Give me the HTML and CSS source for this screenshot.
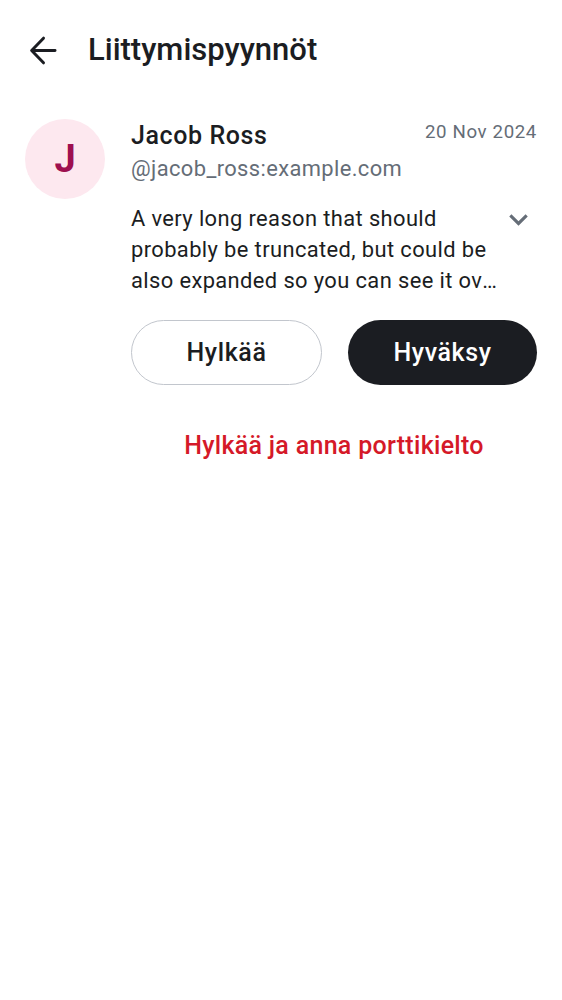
FILE: index.html
```html
<!DOCTYPE html>
<html>
<head>
<meta charset="utf-8">
<link rel="stylesheet" href="styles.css">
</head>
<body>
<header class="topbar">
  <button class="back" aria-label="Back">
    <svg width="37" height="37" viewBox="0 0 24 24"><path d="M19.5 12H4.8M12 4L4.3 12 12 20" fill="none" stroke="#1b1d22" stroke-width="1.9" stroke-linecap="round" stroke-linejoin="round"/></svg>
  </button>
  <h1 class="title">Liittymispyynnöt</h1>
</header>
<main class="request">
  <div class="avatar">J</div>
  <div class="content">
    <div class="head">
      <div class="who">
        <div class="name">Jacob Ross</div>
        <div class="handle">@jacob_ross:example.com</div>
      </div>
      <div class="date">20 Nov 2024</div>
    </div>
    <div class="reason-row">
      <p class="reason">A very long reason that should probably be truncated, but could be also expanded so you can see it <span class="tail">over and over again</span></p>
      <svg class="chev" width="37" height="37" viewBox="0 0 24 24"><path d="M16.59 8.59L12 13.17 7.41 8.59 6 10l6 6 6-6z" fill="#656d77"/></svg>
    </div>
    <div class="actions">
      <button class="btn outline">Hylkää</button>
      <button class="btn filled">Hyväksy</button>
    </div>
    <button class="ban">Hylkää ja anna porttikielto</button>
  </div>
</main>
</body>
</html>
```
FILE: styles.css
```css
* { box-sizing: border-box; }
body {
  margin: 0;
  background: #ffffff;
  font-family: Roboto, "Noto Sans", sans-serif;
  color: #1b1d22;
  width: 562px;
}
.topbar {
  display: flex;
  align-items: center;
  height: 100px;
  padding-left: 25px;
}
.back {
  border: 0;
  background: none;
  padding: 0;
  width: 37px;
  height: 37px;
  display: flex;
  align-items: center;
  justify-content: center;
  margin-right: 26px;
}
.title {
  margin: 0;
  font-size: 31px;
  font-weight: 500;
  line-height: 40px;
  color: #1b1d22;
}
.request {
  display: flex;
  padding: 19px 25px 0 25px;
  gap: 26px;
}
.avatar {
  width: 80px;
  height: 80px;
  flex: none;
  border-radius: 50%;
  background: #fde8ef;
  color: #9e0f4f;
  font-size: 38px;
  font-weight: 700;
  display: flex;
  align-items: center;
  justify-content: center;
}
.content {
  flex: 1;
  display: flex;
  flex-direction: column;
}
.head {
  display: flex;
  justify-content: space-between;
  align-items: flex-start;
}
.name {
  font-size: 25px;
  font-weight: 500;
  line-height: 34px;
  letter-spacing: 0.6px;
  color: #1b1d22;
}
.handle {
  font-size: 21.9px;
  line-height: 31px;
  letter-spacing: 0.39px;
  color: #656d77;
}
.date {
  font-size: 18.7px;
  line-height: 25px;
  letter-spacing: 0.62px;
  color: #656d77;
  padding-top: 1px;
}
.reason-row {
  display: flex;
  align-items: flex-start;
  margin-top: 19px;
}
.reason {
  margin: 0;
  flex: 1;
  font-size: 21.9px;
  line-height: 31.2px;
  letter-spacing: 0.39px;
  color: #1b1d22;
  display: -webkit-box;
  -webkit-line-clamp: 3;
  -webkit-box-orient: vertical;
  overflow: hidden;
}
.reason .tail { word-break: break-all; }
.chev { flex: none; margin-top: -2px; margin-left: -6px; }
.actions {
  display: flex;
  gap: 26px;
  margin-top: 23px;
}
.btn {
  flex: 1;
  height: 65px;
  border-radius: 33px;
  font-family: inherit;
  font-size: 25px;
  font-weight: 500;
  letter-spacing: 0.6px;
}
.btn.outline {
  background: #ffffff;
  border: 1.5px solid #c2c6cd;
  color: #1b1d22;
}
.btn.filled {
  background: #1b1d22;
  border: 0;
  color: #ffffff;
}
.ban {
  margin-top: 44px;
  align-self: center;
  border: 0;
  background: none;
  font-family: inherit;
  font-size: 25px;
  line-height: 34px;
  font-weight: 500;
  letter-spacing: 0.3px;
  color: #d51928;
  padding: 0;
}
```
